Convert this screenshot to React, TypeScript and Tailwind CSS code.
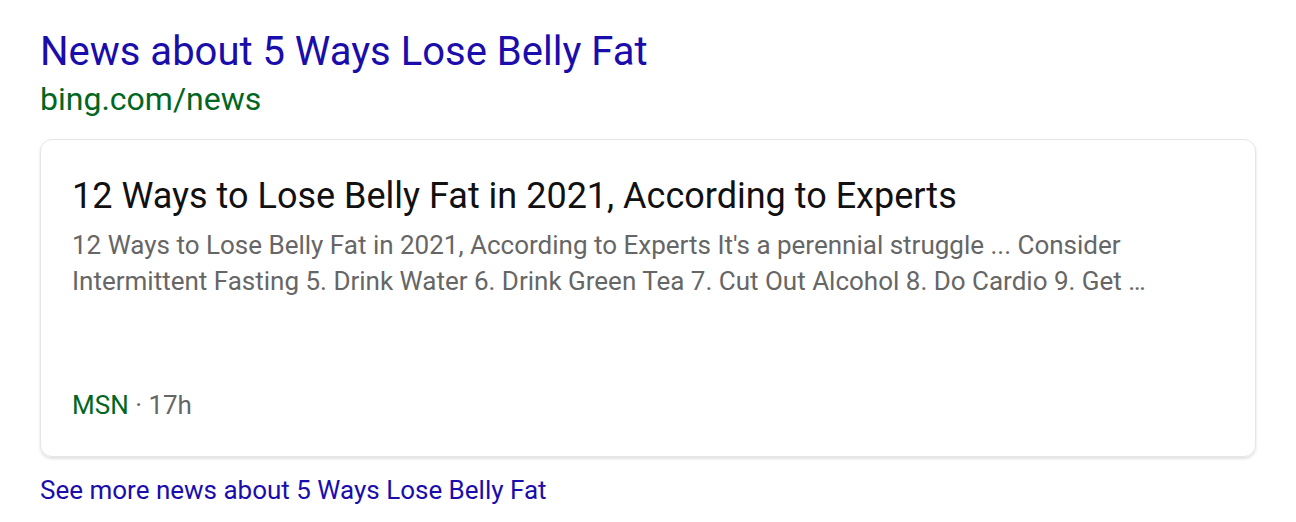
export default function App() {
  return (
    <div className="min-h-screen bg-white px-10 pt-7 font-['Roboto',sans-serif]">
      <a className="block text-[40px] leading-[48px] text-[#1a0dab]">
        News about 5 Ways Lose Belly Fat
      </a>
      <div className="text-[32px] leading-[46px] text-[#006621]">bing.com/news</div>

      <div className="mt-[17px] h-[318px] w-[1216px] rounded-xl border border-[#e6e6e6] pl-[31px] pr-8 pt-[34px] shadow-[0_2px_3px_rgba(0,0,0,0.12)]">
        <div className="text-[36px] leading-[44px] text-[#111]">
          12 Ways to Lose Belly Fat in 2021, According to Experts
        </div>
        <p className="mt-[9px] text-[26px] leading-[36px] text-[#666]">
          12 Ways to Lose Belly Fat in 2021, According to Experts It's a perennial struggle ... Consider
          <br />
          Intermittent Fasting 5. Drink Water 6. Drink Green Tea 7. Cut Out Alcohol 8. Do Cardio 9. Get …
        </p>
        <div className="mt-[88px] text-[26px] leading-[36px]">
          <span className="text-[#006621]">MSN</span>
          <span className="text-[#666]"> · 17h</span>
        </div>
      </div>

      <a className="mt-[15px] block text-[26px] leading-[36px] text-[#1a0dab]">
        See more news about 5 Ways Lose Belly Fat
      </a>
    </div>
  );
}
